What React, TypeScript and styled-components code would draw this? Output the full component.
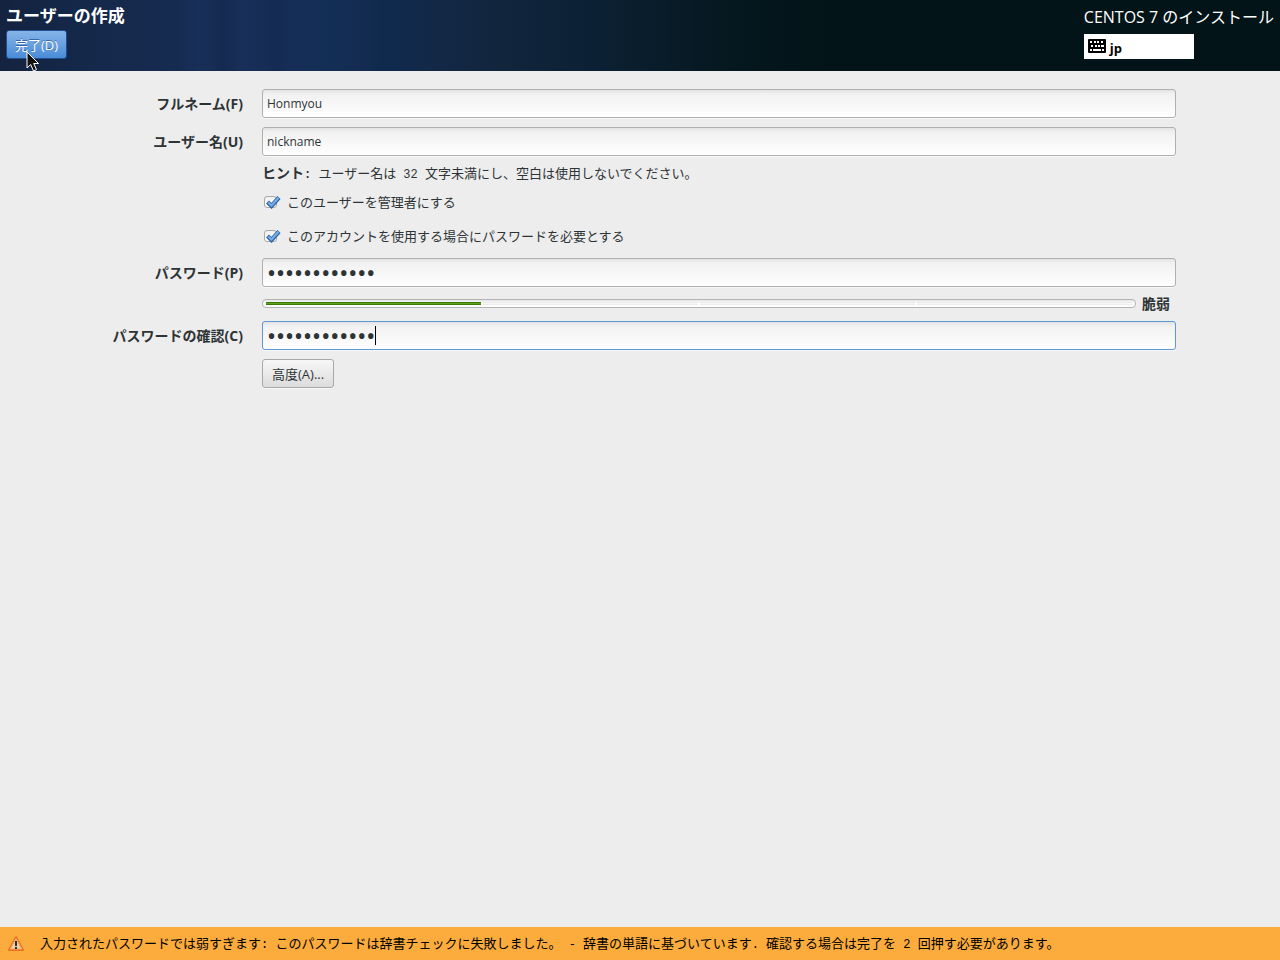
import React from "react";
import styled, { createGlobalStyle, css } from "styled-components";

const GlobalStyle = createGlobalStyle`
  * { box-sizing: border-box; }
  body {
    margin: 0;
    background: #ededed;
    color: #2e3436;
    font-family: "Open Sans", "Noto Sans CJK JP", sans-serif;
    font-size: 13px;
    line-height: 16px;
  }
`;

const Page = styled.div`
  display: flex;
  flex-direction: column;
  min-height: 100vh;
`;

const Header = styled.header`
  display: flex;
  justify-content: space-between;
  height: 71px;
  padding: 6px;
  color: #fff;
  background:
    linear-gradient(90deg, transparent 180px, rgba(24, 60, 110, 0.25) 200px, transparent 214px, rgba(10, 30, 70, 0.2) 222px, transparent 236px, rgba(28, 66, 120, 0.15) 240px, transparent 262px, rgba(10, 30, 66, 0.2) 276px, transparent 290px, rgba(12, 50, 90, 0.2) 330px, transparent 360px, rgba(8, 40, 76, 0.3) 384px, transparent 420px),
    linear-gradient(90deg, #14233f 0, #14284a 80px, #172c52 200px, #162e57 300px, #122a4c 400px, #12263f 480px, #0b2033 600px, #061820 720px, #021417 830px);
`;

const HeaderGroup = styled.div`
  display: flex;
  flex-direction: column;
  align-items: flex-start;
`;

const Title = styled.h1`
  margin: 0 0 4px;
  font-size: 17px;
  line-height: 20px;
  font-weight: 700;
`;

const Product = styled.div`
  margin-bottom: 6px;
  font-size: 16px;
  line-height: 22px;
`;

const Button = styled.button<{ $primary?: boolean }>`
  height: 29px;
  padding: 0 9px;
  border: 1px solid #a8a8a8;
  border-radius: 3px;
  background: linear-gradient(#f7f7f7, #dcdcdc);
  box-shadow: 0 1px 0 #f8f8f8;
  color: #2e3436;
  font: inherit;
  ${(p) =>
    p.$primary &&
    css`
      padding: 0 8px;
      border-color: #1f4d90;
      background: linear-gradient(#86b4e8, #4a8cd8);
      box-shadow: none;
      color: #fff;
      text-shadow: 0 -1px 0 rgba(20, 60, 120, 0.6);
    `}
`;

const ButtonHolder = styled.div`
  position: relative;
`;

const Pointer = styled.svg`
  position: absolute;
  left: 20px;
  top: 21px;
`;

const Layout = styled.div`
  display: flex;
  gap: 4px;
  width: 110px;
  height: 25px;
  padding: 5px 4px 0;
  background: #fff;
  color: #000;
  font-weight: 700;
  line-height: 18px;
`;

const Form = styled.form`
  flex: 1;
  display: grid;
  grid-template-columns: 139px 1fr;
  align-content: start;
  gap: 9px 19px;
  padding: 18px 104px;
`;

const Label = styled.label`
  align-self: center;
  justify-self: end;
  font-size: 14px;
  font-weight: 700;
  white-space: nowrap;
`;

const Cell = styled.div`
  grid-column: 2;
  position: relative;
  display: flex;
`;

const Input = styled.input<{ $active?: boolean }>`
  width: 100%;
  height: 29px;
  padding: 0 4px;
  border: 1px solid ${(p) => (p.$active ? "#5f97d6" : "#b0b0b0")};
  border-radius: 3px;
  outline: none;
  background: linear-gradient(#e2e2e2, #f1f1f1 4px, #fff);
  box-shadow: 0 1px 0 #f8f8f8;
  color: #2e3436;
  font-family: "Open Sans", "Noto Sans CJK JP", sans-serif;
  font-size: 12px;
  &[type="password"] {
    font-family: "Noto Sans", sans-serif;
    font-size: 24px;
  }
`;

const Caret = styled.span`
  position: absolute;
  left: 113px;
  top: 5px;
  width: 1px;
  height: 19px;
  background: #000;
`;

const Hint = styled.p`
  grid-column: 2;
  height: 16px;
  margin: 0;
  white-space: nowrap;
  b { font-size: 14px; }
`;

const Half = styled.span`
  font-family: "Liberation Mono", monospace;
  font-size: 12px;
  white-space: pre;
`;

const Check = styled.label`
  grid-column: 2;
  justify-self: start;
  position: relative;
  display: flex;
  align-items: center;
  gap: 8px;
  height: 25px;
  padding: 0 0 1px 2px;
`;

const Box = styled.input`
  appearance: none;
  width: 13px;
  height: 12px;
  margin: 0 2px 0 0;
  border: 1px solid #a9a9a0;
  border-radius: 3px;
  background: linear-gradient(#f0f0f0, #fff);
  &:not(:checked) + svg { display: none; }
`;

const Tick = styled.svg`
  position: absolute;
  left: 4px;
  top: 5px;
  pointer-events: none;
`;

const Strength = styled.div`
  grid-column: 2;
  display: flex;
  align-items: center;
  gap: 6px;
  height: 16px;
`;

const Meter = styled.div`
  flex: 1;
  display: grid;
  grid-template-columns: repeat(4, 1fr);
  gap: 2px;
  height: 9px;
  margin-bottom: 1px;
  padding: 2px 3px;
  border: 1px solid #b4b4b4;
  border-radius: 4px;
  background: linear-gradient(#e4e4e4, #fff 3px);
`;

const Segment = styled.span<{ $on?: boolean }>`
  border: 1px solid ${(p) => (p.$on ? "#3c7a06" : "#ececec")};
  border-width: 1px 0;
  background: ${(p) => (p.$on ? "#5aa31a" : "#f6f6f6")};
`;

const Verdict = styled.strong`
  width: 34px;
  font-size: 14px;
`;

const Warning = styled.footer`
  display: flex;
  align-items: center;
  gap: 16px;
  height: 33px;
  padding: 0 8px;
  background: #fbac3d;
  color: #000;
  white-space: nowrap;
`;

const TickMark = () => (
  <Tick width="15" height="14" viewBox="0 0 15 14" aria-hidden="true">
    <path d="M1.500 7l4 4L13 2.500" fill="none" stroke="#2f66a8" strokeWidth="4.200" />
    <path d="M2.200 7.500l3.300 3L12.500 2.800" fill="none" stroke="#78aee6" strokeWidth="2.200" />
  </Tick>
);

const KeyboardIcon = () => (
  <svg width="18" height="14" viewBox="0 0 18 14" aria-hidden="true">
    <rect width="18" height="14" rx="1" fill="#000" />
    <path d="M2 3h2M6 3h2M9 3h2M13 3h2M3 7h2M7 7h2M10 7h2M13 7h3M2 11h2M5 11h8M14 11h2" stroke="#fff" strokeWidth="2" />
  </svg>
);

const WarningIcon = () => (
  <svg width="16" height="16" viewBox="0 0 16 16" aria-hidden="true">
    <path d="M8 1.200L15 14H1z" fill="#e8731c" stroke="#e8731c" strokeWidth="2" strokeLinejoin="round" />
    <path d="M8 2.500L13.800 13H2.200z" fill="#f0cfa8" stroke="#f6a564" />
    <path d="M7 5h2v5H7zM7 11h2v2H7z" fill="#33302c" />
  </svg>
);

export default function App() {
  return (
    <Page>
      <GlobalStyle />
      <Header>
        <HeaderGroup>
          <Title>ユーザーの作成</Title>
          <ButtonHolder>
            <Button $primary type="button">完了(D)</Button>
            <Pointer width="14" height="21" viewBox="0 0 14 21" aria-hidden="true">
              <path d="M1 1v16l3.700-3.500L7.500 20l3-1.300-2.800-6.200H12.500z" fill="#111" stroke="#fff" />
            </Pointer>
          </ButtonHolder>
        </HeaderGroup>
        <HeaderGroup>
          <Product>CENTOS 7 のインストール</Product>
          <Layout>
            <KeyboardIcon />
            jp
          </Layout>
        </HeaderGroup>
      </Header>
      <Form>
        <Label htmlFor="fullname">フルネーム(F)</Label>
        <Input id="fullname" defaultValue="Honmyou" />
        <Label htmlFor="username">ユーザー名(U)</Label>
        <Input id="username" defaultValue="nickname" />
        <Hint>
          <b>ヒント<Half>: </Half></b>ユーザー名は<Half> 32 </Half>文字未満にし、空白は使用しないでください。
        </Hint>
        <Check>
          <Box type="checkbox" defaultChecked />
          <TickMark />
          このユーザーを管理者にする
        </Check>
        <Check>
          <Box type="checkbox" defaultChecked />
          <TickMark />
          このアカウントを使用する場合にパスワードを必要とする
        </Check>
        <Label htmlFor="password">パスワード(P)</Label>
        <Input id="password" type="password" defaultValue="dictionary12" />
        <Strength>
          <Meter role="meter" aria-label="パスワード" aria-valuemin={0} aria-valuemax={4} aria-valuenow={1}>
            <Segment $on />
            <Segment />
            <Segment />
            <Segment />
          </Meter>
          <Verdict>脆弱</Verdict>
        </Strength>
        <Label htmlFor="confirm">パスワードの確認(C)</Label>
        <Cell>
          <Input id="confirm" type="password" defaultValue="dictionary12" $active />
          <Caret />
        </Cell>
        <Cell>
          <Button type="button">高度(A)...</Button>
        </Cell>
      </Form>
      <Warning role="alert">
        <WarningIcon />
        <span>
          入力されたパスワードでは弱すぎます<Half>: </Half>このパスワードは辞書チェックに失敗しました。<Half> - </Half>辞書の単語に基づいています<Half>. </Half>確認する場合は完了を<Half> 2 </Half>回押す必要があります。
        </span>
      </Warning>
    </Page>
  );
}
